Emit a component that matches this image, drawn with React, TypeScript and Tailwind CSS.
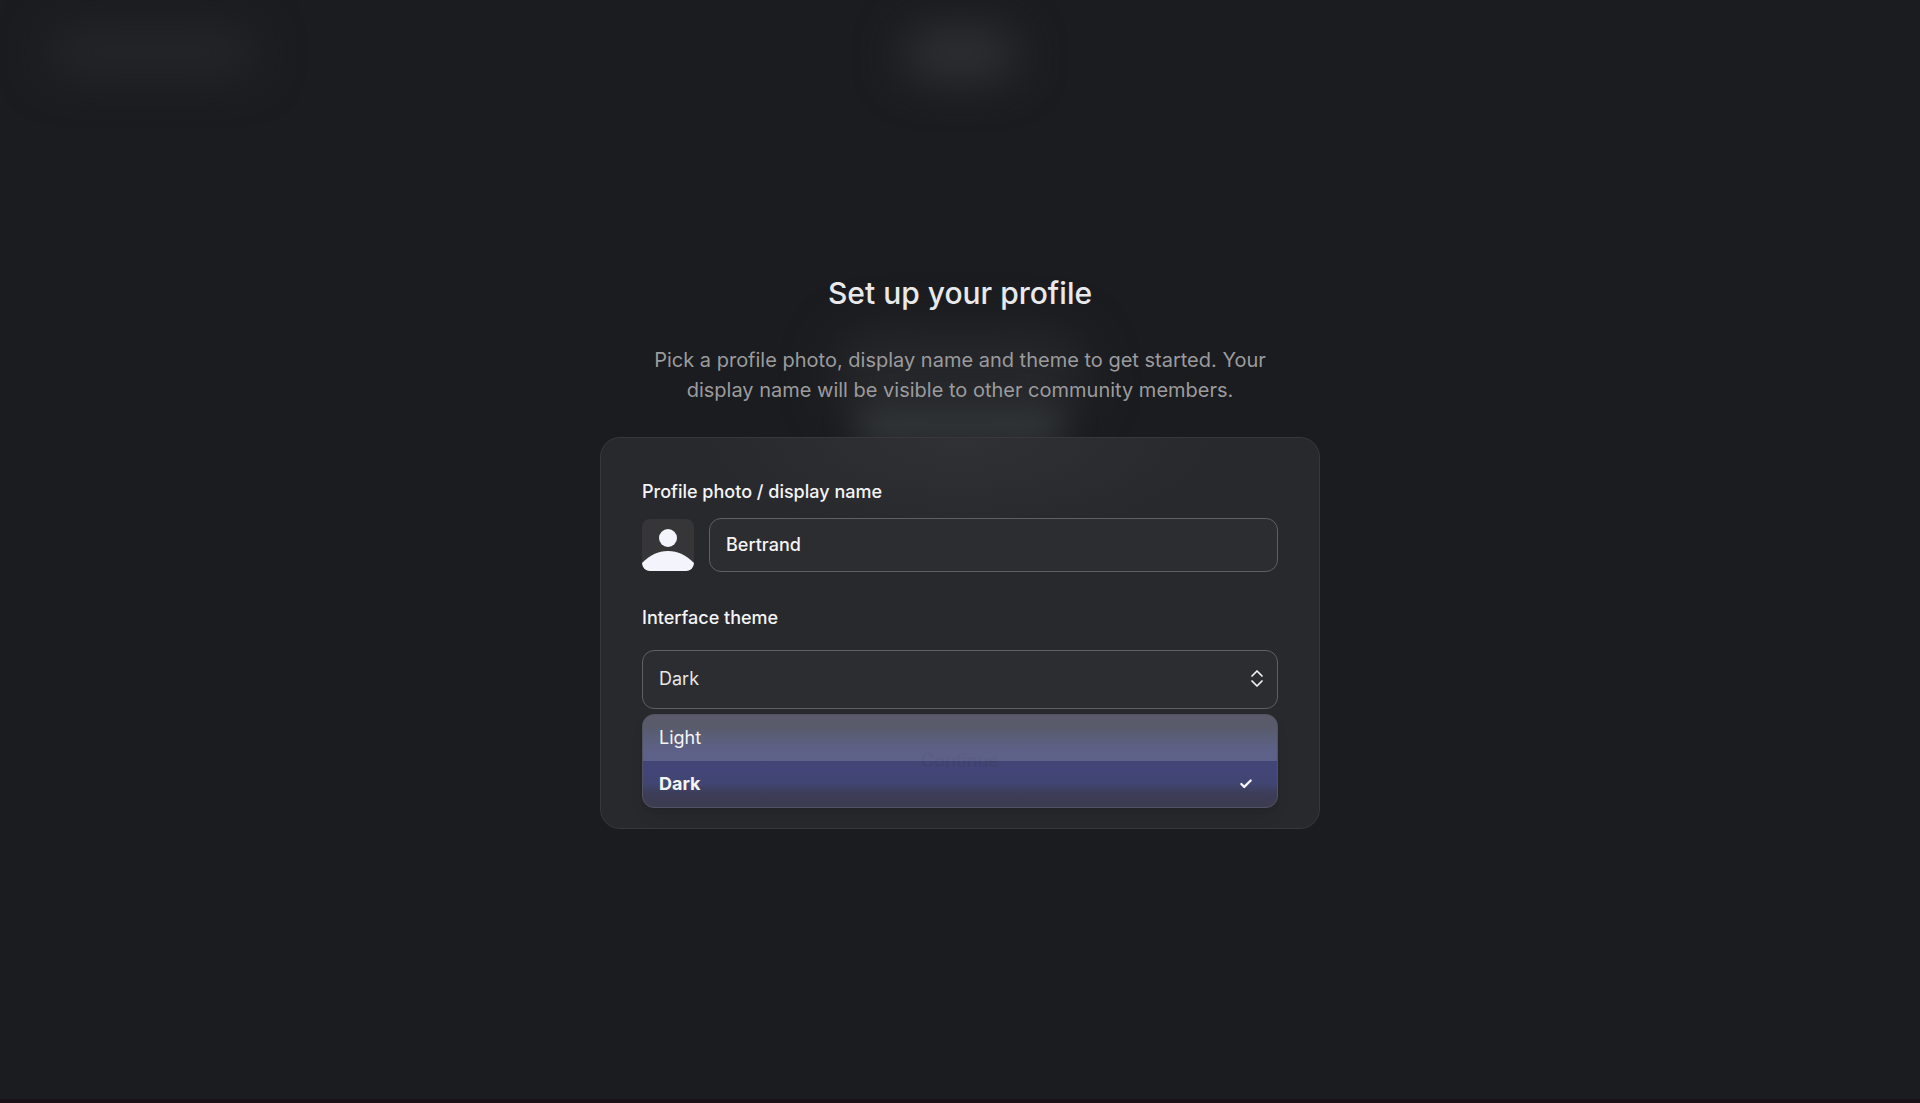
import { useState } from "react"
import { Check } from "lucide-react"

const themes = ["Light", "Dark"]

function Avatar() {
  return (
    <svg viewBox="0 0 52 52" className="size-[52px] shrink-0 rounded-lg bg-[#363638]" aria-hidden="true">
      <circle cx="26" cy="19" r="9" fill="#f3f4fc" />
      <path d="M0 44 C8 36 16 32 26 32 C36 32 44 36 52 44 V46 A6 6 0 0 1 46 52 H6 A6 6 0 0 1 0 46 Z" fill="#f3f4fc" />
    </svg>
  )
}

function UpDown() {
  return (
    <svg
      viewBox="0 0 16 20"
      className="pointer-events-none absolute right-3 top-1/2 h-5 w-4 -translate-y-1/2"
      fill="none"
      stroke="#f4f4f6"
      strokeWidth="1.7"
      strokeLinecap="round"
      strokeLinejoin="round"
      aria-hidden="true"
    >
      <path d="M2 7 L7 2 L12 7" />
      <path d="M2 12 L7 17 L12 12" />
    </svg>
  )
}

function Backdrop() {
  return (
    <div className="pointer-events-none absolute inset-0 overflow-hidden" aria-hidden="true">
      <div className="absolute left-12 top-8 h-10 w-52 rounded-full bg-[#26282b] blur-xl" />
      <div className="absolute left-1/2 top-8 h-11 w-28 -translate-x-1/2 rounded-full bg-[#333439] blur-xl" />
      <div className="absolute left-1/2 top-[330px] h-24 w-64 -translate-x-1/2 rounded-full bg-[#26272a] blur-xl" />
      <div className="absolute left-1/2 top-[408px] h-9 w-52 -translate-x-1/2 rounded-full bg-[#32373a] blur-lg" />
    </div>
  )
}

export default function App() {
  const [name, setName] = useState("Bertrand")
  const [theme, setTheme] = useState("Dark")

  return (
    <main className="relative flex min-h-screen flex-col items-center justify-center border-b-4 border-[#1a1117] bg-[#1b1c1f] px-4 pt-0.5 font-['Inter',sans-serif] text-[#f4f4f6]">
      <Backdrop />
      <div className="relative flex w-full max-w-[720px] flex-col">
        <h1 className="text-center text-[30px] leading-10 font-medium text-[#e9e9eb]">Set up your profile</h1>
        <p className="mx-auto mt-8 max-w-[660px] text-center text-xl leading-[30px] text-[#9b9b9e]">
          Pick a profile photo, display name and theme to get started. Your display name will be visible to other
          community members.
        </p>
        <form
          className="mt-8 rounded-[20px] border border-[#37383b] bg-[#28292d] bg-[radial-gradient(ellipse_260px_100px_at_top,#303135,#28292d)] px-[41px] pt-10 pb-5"
          onSubmit={(e) => e.preventDefault()}
        >
          <label htmlFor="display-name" className="block text-lg leading-7 font-medium">
            Profile photo / display name
          </label>
          <div className="mt-3 flex items-center gap-[15px]">
            <Avatar />
            <input
              id="display-name"
              type="text"
              value={name}
              onChange={(e) => setName(e.target.value)}
              className="h-[54px] min-w-0 flex-1 rounded-xl border border-[#5f6065] bg-[#2c2d31] px-4 text-lg font-medium outline-none"
            />
          </div>
          <label htmlFor="theme" className="mt-8 block text-lg leading-7 font-medium">
            Interface theme
          </label>
          <div className="relative mt-[18px]">
            <select
              id="theme"
              value={theme}
              onChange={(e) => setTheme(e.target.value)}
              className="block h-[59px] w-full appearance-none rounded-xl border border-[#5f6065] bg-[#2c2d31] px-4 text-lg text-[#e6e6e8] outline-none"
            >
              {themes.map((t) => (
                <option key={t}>{t}</option>
              ))}
            </select>
            <UpDown />
          </div>
          <ul
            role="listbox"
            aria-label="Interface theme"
            className="relative mt-[5px] overflow-hidden rounded-xl border border-[#515362] bg-[#3c3f52] bg-[linear-gradient(#3c3f50_12%,#414672_38%,#424577_58%,#414572_74%,#3c3d56_86%,#3b3c50)] shadow-lg"
          >
            <li
              className="pointer-events-none absolute inset-0 flex items-center justify-center text-lg font-medium text-[#3c3c62]/40"
              role="presentation"
            >
              Continue
            </li>
            {themes.map((t) => (
              <li key={t} role="option" aria-selected={t === theme}>
                <button
                  type="button"
                  onClick={() => setTheme(t)}
                  className={`relative flex h-[46px] w-full items-center justify-between pr-6 pl-4 text-lg ${
                    t === theme ? "font-bold" : "bg-white/15"
                  }`}
                >
                  {t}
                  {t === theme && <Check size={14} strokeWidth={4} />}
                </button>
              </li>
            ))}
          </ul>
        </form>
      </div>
    </main>
  )
}
